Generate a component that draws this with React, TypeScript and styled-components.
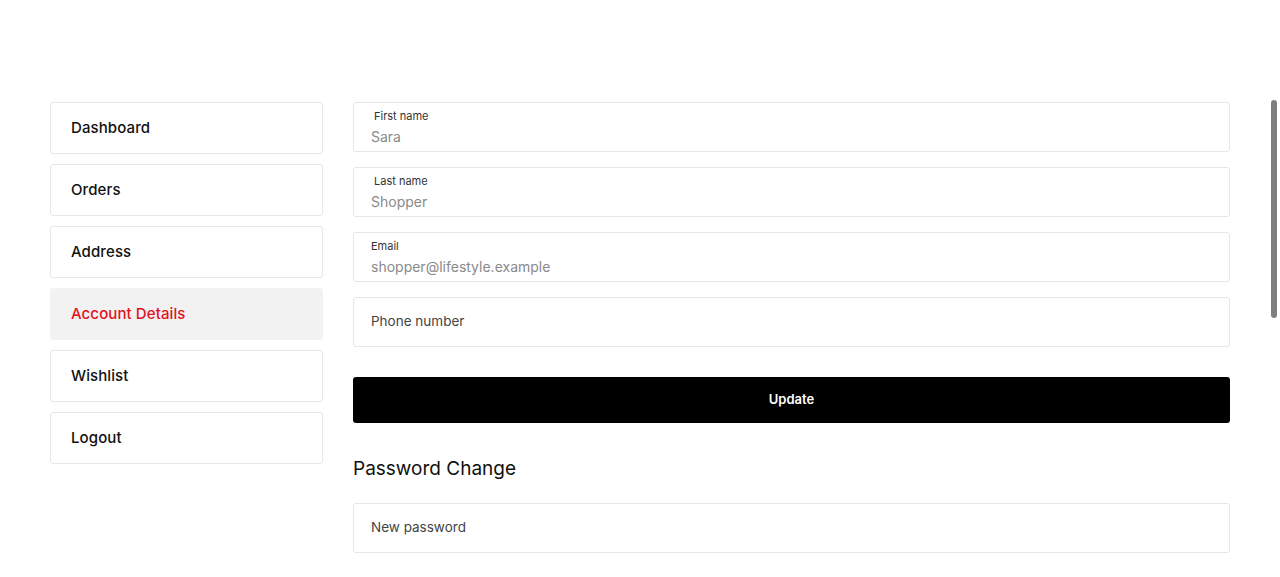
import React from 'react';
import styled, { createGlobalStyle } from 'styled-components';

const GlobalStyle = createGlobalStyle`
  html, body {
    margin: 0;
    padding: 0;
    background: #fff;
    font-family: 'Inter', 'Liberation Sans', sans-serif;
    color: #111;
  }
  * {
    box-sizing: border-box;
  }
`;

const menuItems = ['Dashboard', 'Orders', 'Address', 'Account Details', 'Wishlist', 'Logout'];

const fields = [
  { label: 'First name', value: 'Sara', inset: 3 },
  { label: 'Last name', value: 'Shopper', inset: 3 },
  { label: 'Email', value: 'shopper@lifestyle.example', inset: 0 },
];

const App = () => {
  return (
    <>
      <GlobalStyle />
      <Page>
        <Sidebar>
          {menuItems.map((item) => (
            <MenuItem key={item} active={item === 'Account Details'}>
              {item}
            </MenuItem>
          ))}
        </Sidebar>
        <Main>
          <FieldList>
            {fields.map((field) => (
              <Field key={field.label}>
                <FieldLabel inset={field.inset}>{field.label}</FieldLabel>
                <FieldValue>{field.value}</FieldValue>
              </Field>
            ))}
            <Field>
              <Placeholder>Phone number</Placeholder>
            </Field>
          </FieldList>
          <UpdateButton type="button">Update</UpdateButton>
          <SectionTitle>Password Change</SectionTitle>
          <Field>
            <Placeholder>New password</Placeholder>
          </Field>
        </Main>
      </Page>
      <ScrollThumb />
    </>
  );
};

export default App;

const Page = styled.div`
  display: flex;
  gap: 30px;
  padding: 102px 50px 40px;
  width: 1280px;
`;

const Sidebar = styled.nav`
  display: flex;
  flex-direction: column;
  gap: 10px;
  width: 273px;
  flex-shrink: 0;
`;

const MenuItem = styled.div<{ active: boolean }>`
  display: flex;
  align-items: center;
  height: 52px;
  padding: 0 20px 2px;
  border: 1px solid ${({ active }) => (active ? '#f2f2f2' : '#e6e6e6')};
  border-radius: 3px;
  background-color: ${({ active }) => (active ? '#f2f2f2' : '#fff')};
  color: ${({ active }) => (active ? '#e3101d' : '#111')};
  font-size: 15px;
  font-weight: 500;
  letter-spacing: 0.1px;
`;

const Main = styled.div`
  display: flex;
  flex-direction: column;
  width: 877px;
`;

const FieldList = styled.div`
  display: flex;
  flex-direction: column;
  gap: 15px;
`;

const Field = styled.div`
  display: flex;
  flex-direction: column;
  justify-content: center;
  height: 50px;
  padding: 0 17px;
  border: 1px solid #e6e6e6;
  border-radius: 3px;
`;

const FieldLabel = styled.span<{ inset: number }>`
  padding-left: ${({ inset }) => inset}px;
  font-size: 11px;
  line-height: 14px;
  color: #333;
`;

const FieldValue = styled.span`
  margin-top: 5px;
  font-size: 14px;
  line-height: 18px;
  color: #8a8a8a;
`;

const Placeholder = styled.span`
  margin-bottom: 2px;
  font-size: 13.5px;
  line-height: 18px;
  color: #444;
`;

const UpdateButton = styled.button`
  margin-top: 30px;
  height: 46px;
  padding: 0 0 3px;
  border: none;
  border-radius: 3px;
  background-color: #000;
  color: #fff;
  font-family: inherit;
  font-size: 13px;
  font-weight: 600;
  cursor: pointer;
`;

const SectionTitle = styled.h2`
  margin: 34px 0 22px;
  font-size: 19px;
  font-weight: 400;
  line-height: 24px;
  color: #111;
`;

const ScrollThumb = styled.div`
  position: fixed;
  top: 100px;
  right: 3px;
  width: 6px;
  height: 218px;
  border-radius: 3px;
  background-color: #7f7f7f;
`;
